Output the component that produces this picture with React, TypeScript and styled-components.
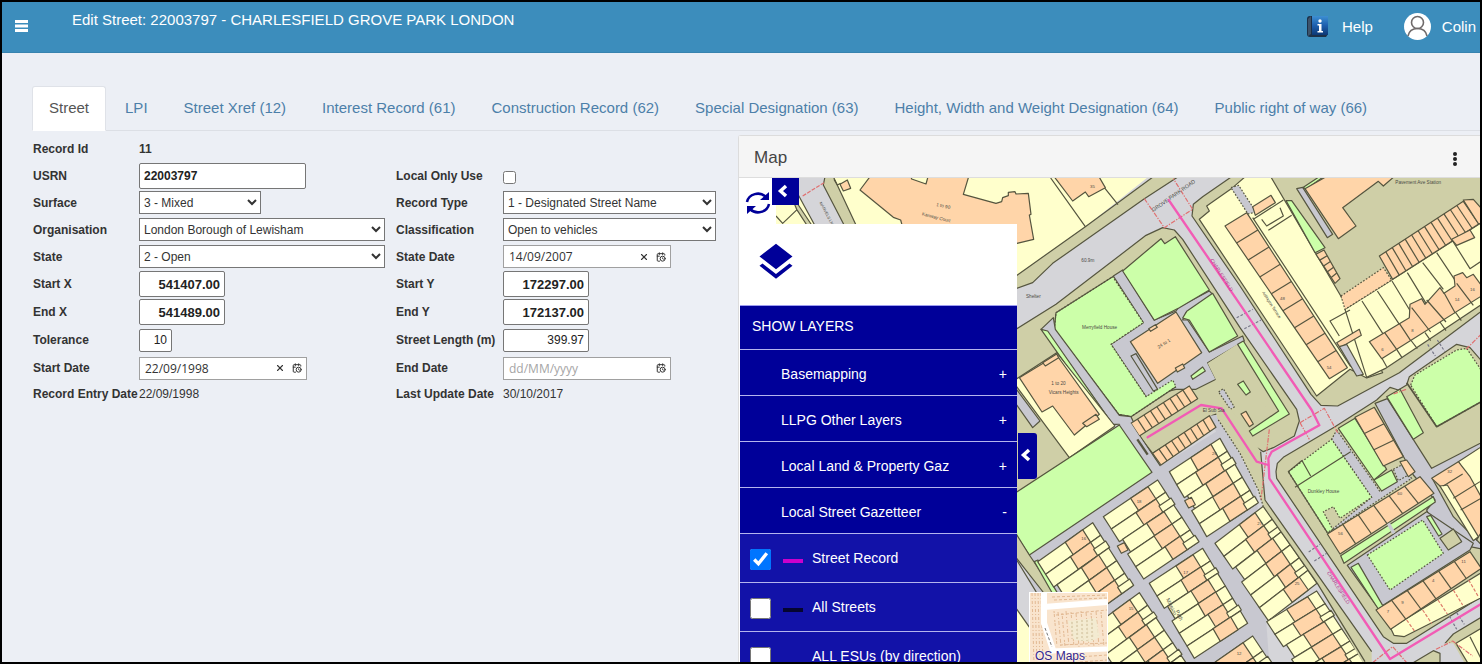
import React from "react";
import styled, { createGlobalStyle } from "styled-components";
import { MdLayers } from "react-icons/md";
import { CalendarClock, X } from "lucide-react";

const GlobalStyle = createGlobalStyle`
  *, *::before, *::after { box-sizing: border-box; }
  body { margin: 0; font-family: "Liberation Sans", Arial, sans-serif; color: #333; background: #ecf0f5; }
  h1, h2, ul, dl, dd { margin: 0; padding: 0; font-weight: 400; }
`;

const NAVY = "#000099";

/* ---------- page shell ---------- */

const Frame = styled.div`
  display: flex;
  flex-direction: column;
  height: 100vh;
  border: 2px solid #000;
  background: #eceff5;
  overflow: hidden;
`;

const Header = styled.header`
  display: flex;
  flex: none;
  align-items: center;
  height: 51px;
  padding: 0 4px 2px 13px;
  background: #3c8dbc;
  border-bottom: 1px solid #3783af;
  color: #fff;
  font-size: 15px;
`;

const MenuButton = styled.button`
  display: flex;
  padding: 0;
  border: 0;
  background: none;
  color: #fff;
`;

const Title = styled.h1`
  flex: 1;
  align-self: flex-start;
  padding: 8px 0 0 44px;
  font-size: 15px;
  line-height: 20px;
`;

const HeaderLink = styled.a<{ $gap: number }>`
  display: flex;
  align-items: center;
  gap: ${(p) => p.$gap}px;
  margin-left: 31px;
  color: #fff;
  text-decoration: none;
`;

const TabBar = styled.nav`
  display: flex;
  flex: none;
  margin: 33px 0 0 30px;
  border-bottom: 1px solid #dcdfe5;
`;

const Tab = styled.a<{ $active?: boolean }>`
  margin: 0 2px -1px 0;
  padding: 10px 16px 12px;
  border: 1px solid ${(p) => (p.$active ? "#dfe2e8" : "transparent")};
  border-bottom-color: ${(p) => (p.$active ? "#fff" : "transparent")};
  border-radius: 3px 3px 0 0;
  background: ${(p) => (p.$active ? "#fff" : "transparent")};
  color: ${(p) => (p.$active ? "#555" : "#4c7fa9")};
  font-size: 15px;
  line-height: 21px;
  text-decoration: none;
  white-space: nowrap;
`;

const Content = styled.main`
  display: grid;
  flex: 1;
  min-height: 0;
  grid-template-columns: 49.8% minmax(0, 1fr);
`;

/* ---------- form ---------- */

const Form = styled.form`
  display: grid;
  align-content: start;
  align-items: center;
  grid-template-columns: 106px 257px 107px minmax(0, 1fr);
  grid-template-rows: repeat(5, 27px) repeat(4, 28px) 24px;
  padding: 4px 0 0 31px;
  font-size: 12px;
`;

const Label = styled.label<{ $second?: boolean }>`
  grid-column: ${(p) => (p.$second ? 3 : 1)};
  font-weight: 700;
  white-space: nowrap;
`;

const TextBox = styled.input<{ $w: number; $strong?: boolean; $number?: boolean }>`
  width: ${(p) => p.$w}px;
  height: ${(p) => (p.$strong ? 26 : 23)}px;
  padding: 1px 4px;
  border: 1px solid #767676;
  border-radius: 2px;
  background: #fff;
  color: #222;
  font: ${(p) => (p.$strong ? 700 : 400)} ${(p) => (p.$strong && p.$number ? 13 : 12)}px "Liberation Sans", Arial, sans-serif;
  text-align: ${(p) => (p.$number ? "right" : "left")};
`;

const Select = styled.select<{ $w: number }>`
  width: ${(p) => p.$w}px;
  height: 23px;
  border: 1px solid #767676;
  border-radius: 0;
  background: #fff;
  color: #333;
  font: 12px "Liberation Sans", Arial, sans-serif;
`;

const Tick = styled.input`
  width: 13px;
  height: 13px;
  margin: 3px 0 0;
`;

const DateBox = styled.div`
  display: flex;
  align-items: center;
  gap: 7px;
  width: 168px;
  height: 23px;
  padding: 0 4px 0 5px;
  border: 1px solid #a0a0a0;
  background: #fff;
`;

const DateInput = styled.input`
  flex: 1;
  min-width: 0;
  padding: 0;
  border: 0;
  outline: 0;
  color: #333;
  font: 12px "Open Sans", sans-serif;
  &::placeholder { color: #a5a5a5; }
`;

const TinyButton = styled.button`
  display: flex;
  padding: 0;
  border: 0;
  background: none;
  color: #333;
`;

function DateField({ id, value }: { id: string; value: string }) {
  return (
    <DateBox>
      <DateInput id={id} defaultValue={value} placeholder="dd/MM/yyyy" />
      {value && (
        <TinyButton type="button" aria-label="Clear date"><X size={10} strokeWidth={2.6} /></TinyButton>
      )}
      <TinyButton type="button" aria-label="Pick date"><CalendarClock size={10} strokeWidth={2.4} /></TinyButton>
    </DateBox>
  );
}

function Choice({ id, w, text }: { id: string; w: number; text: string }) {
  return (
    <Select id={id} $w={w} defaultValue={text}>
      <option>{text}</option>
    </Select>
  );
}

function StreetForm() {
  return (
    <Form>
      <Label as="span">Record Id</Label>
      <b>11</b>

      <Label htmlFor="usrn">USRN</Label>
      <TextBox id="usrn" $w={167} $strong defaultValue="22003797" />
      <Label $second htmlFor="local">Local Only Use</Label>
      <Tick id="local" type="checkbox" />

      <Label htmlFor="surface">Surface</Label>
      <Choice id="surface" w={122} text="3 - Mixed" />
      <Label $second htmlFor="rtype">Record Type</Label>
      <Choice id="rtype" w={213} text="1 - Designated Street Name" />

      <Label htmlFor="org">Organisation</Label>
      <Choice id="org" w={246} text="London Borough of Lewisham" />
      <Label $second htmlFor="class">Classification</Label>
      <Choice id="class" w={213} text="Open to vehicles" />

      <Label htmlFor="state">State</Label>
      <Choice id="state" w={246} text="2 - Open" />
      <Label $second htmlFor="sdate">State Date</Label>
      <DateField id="sdate" value="14/09/2007" />

      <Label htmlFor="sx">Start X</Label>
      <TextBox id="sx" $w={86} $strong $number defaultValue="541407.00" />
      <Label $second htmlFor="sy">Start Y</Label>
      <TextBox id="sy" $w={86} $strong $number defaultValue="172297.00" />

      <Label htmlFor="ex">End X</Label>
      <TextBox id="ex" $w={86} $strong $number defaultValue="541489.00" />
      <Label $second htmlFor="ey">End Y</Label>
      <TextBox id="ey" $w={86} $strong $number defaultValue="172137.00" />

      <Label htmlFor="tol">Tolerance</Label>
      <TextBox id="tol" $w={33} $number defaultValue="10" />
      <Label $second htmlFor="len">Street Length (m)</Label>
      <TextBox id="len" $w={86} $number defaultValue="399.97" />

      <Label htmlFor="start">Start Date</Label>
      <DateField id="start" value="22/09/1998" />
      <Label $second htmlFor="end">End Date</Label>
      <DateField id="end" value="" />

      <Label as="span">Record Entry Date</Label>
      <span>22/09/1998</span>
      <Label as="span" $second>Last Update Date</Label>
      <span>30/10/2017</span>
    </Form>
  );
}

/* ---------- map drawing ---------- */

type Pt = [number, number];
const FILL: Record<string, string> = {
  y: "#ffffcc",
  o: "#ffd5a9",
  g: "#ccffa9",
  v: "#cfcfa7",
  r: "#d5d5d9",
  p: "#c8c8d0",
};
const INK = "#55553f";

/* a filled parcel; points are "x,y x,y ..." */
function Area({ c, pts, dash, bare }: { c: string; pts: string; dash?: boolean; bare?: boolean }) {
  return (
    <polygon
      points={pts}
      fill={FILL[c]}
      stroke={bare ? "none" : INK}
      strokeDasharray={dash ? "5 5" : undefined}
    />
  );
}

const mix = (a: Pt, b: Pt, t: number): Pt => [a[0] + (b[0] - a[0]) * t, a[1] + (b[1] - a[1]) * t];

/* a row of n units between the edges a-b and d-e */
function Row({ a, b, e, d, n, c = "o" }: { a: Pt; b: Pt; e: Pt; d: Pt; n: number; c?: string }) {
  return (
    <>
      <polygon points={[a, b, e, d].join(" ")} fill={FILL[c]} stroke={INK} />
      {Array.from({ length: n - 1 }, (_, i) => {
        const p = mix(a, b, (i + 1) / n);
        const q = mix(d, e, (i + 1) / n);
        return <path key={i} d={`M${p} L${q}`} stroke={INK} fill="none" />;
      })}
    </>
  );
}

/* terraced plots: gardens either side of a stepped line of houses */
function Terrace({ at, u, v, n, from = 0.5, to = 0.82 }: { at: Pt; u: Pt; v: Pt; n: number; from?: number; to?: number }) {
  const pos = (s: number, t: number): Pt => [
    Math.round(at[0] + u[0] * s + v[0] * t),
    Math.round(at[1] + u[1] * s + v[1] * t),
  ];
  return (
    <>
      {Array.from({ length: n }, (_, i) => {
        const t0 = i / n;
        const t1 = (i + 1) / n;
        const jut = i % 2 ? 0.05 : 0;
        const f = from - jut + (i > 2 ? 0.04 : 0);
        const left = i === 2 ? 0.06 : 0;
        return (
          <g key={i} stroke={INK}>
            <polygon points={[pos(left, t0), pos(1, t0), pos(1, t1), pos(left, t1)].join(" ")} fill={FILL.y} />
            <polygon points={[pos(f, t0), pos(to, t0), pos(to, t1), pos(f, t1)].join(" ")} fill={FILL.o} />
            {i % 3 === 1 && (
              <polygon points={[pos(to - 0.02, t0 + 0.1), pos(1.02, t0 + 0.1), pos(1.02, t1), pos(to - 0.02, t1)].join(" ")} fill={FILL.y} />
            )}
          </g>
        );
      })}
    </>
  );
}

function StreetMap() {
  return (
    <MapSvg viewBox="-828 6 2220 1452" preserveAspectRatio="xMinYMin slice" role="img" aria-label="Street map">
      <rect x="-828" y="0" width="2240" height="1470" fill={FILL.r} />
      <g strokeWidth="3.6" strokeLinejoin="round">
        {/* north west of Grove Park Road */}
        <Area c="y" bare pts="-828,0 400,0 208,152 0,300 -60,345 -828,345" />
        <g transform="translate(-858 -138)">
          <path d="M138 258 L158 280 L202 238" stroke={INK} fill="none" />
          <Area c="v" pts="180,190 205,225 255,300 240,300 200,238" />
          <Area c="r" pts="195,140 300,140 380,300 262,300 205,195" />
          <Area c="v" pts="285,140 310,140 385,300 350,300 280,165" />
          <path d="M218 198 L282 158" stroke="#e07070" strokeDasharray="12 4" fill="none" />
          <Area c="o" pts="420,140 390,180 490,262 512,270 520,300 861,340 911,328 898,255 903,253 895,190 858,192 855,185 835,187 835,197 818,203 815,215 798,220 700,193 716,140" />
          <Area c="y" pts="543,140 545,147 588,162 594,140" />
          <Area c="o" pts="330,163 352,150 362,175 340,183" />
          <path d="M312 148 L322 165 L332 160" stroke={INK} fill="none" />
        </g>
        <Area c="v" pts="415,0 490,0 385,68 110,262 50,320 -20,345 -20,315 0,300 208,152" />
        <path d="M104 6 L208 152 M265 35 L306 86" stroke={INK} fill="none" />
        <Area c="o" pts="116,4 170,75 208,48 218,62 268,35 250,4" />

        {/* Merryfield House block */}
        <Area c="v" pts="-10,466 120,385 390,178 440,155 475,162 500,190 672,455 842,700 850,735 835,780 772,815 742,827 715,810 640,700 590,718 410,832 370,780 330,730 -10,1000" />
        <Area c="p" pts="292,300 320,282 415,432 480,405 490,392 580,345 590,355 510,410 500,432 515,432 580,528 680,480 685,495 575,560 600,610 540,640 480,640 390,662 285,505 382,440" />
        <Area c="g" pts="320,285 435,188 446,203 478,182 580,342 490,395 415,433" />
        <Area c="g" dash pts="120,410 290,302 382,440 285,505 390,662 470,612 480,632 345,722 308,715 115,460" />
        <path d="M115 460 L120 410 L290 302 M480 632 L345 722 L308 715 L115 460" stroke={INK} fill="none" />
        <Area c="g" pts="512,406 590,352 665,480 580,528 520,432 500,426" />
        <Area c="o" pts="343,497 480,408 557,530 425,622" />
        <Area c="o" pts="398,458 418,446 424,454 404,466" />
        <Area c="o" pts="478,576 500,564 506,576 484,588" />
        <Area c="p" pts="345,540 360,533 425,640 412,645" />
        <Area c="p" pts="75,460 112,425 118,460 310,718 345,722 372,780 440,880 400,900 310,745 290,745 95,470" />
        <Area c="g" pts="75,460 95,465 292,748 276,745" />
        <Area c="v" bare pts="575,562 668,502 772,672 742,700 640,700 560,690 545,655 600,612" />
        <Area c="g" pts="525,600 560,573 568,585 530,610" />
        <Area c="g" pts="665,625 682,615 703,648 690,657" />
        <Area c="g" pts="665,505 682,495 820,714 710,780 700,765 788,705" />
        <Area c="o" pts="675,714 690,706 712,744 700,752" />
        <Area c="p" dash pts="608,648 622,638 655,693 643,700" />
        <Area c="y" pts="-10,616 122,530 297,750 160,845" />
        <Area c="p" pts="-10,625 72,735 50,755 -10,670" />
        <Area c="o" pts="10,605 122,537 250,715 175,777 110,690 78,708" />
        <Area c="o" pts="200,742 240,715 250,730 212,752" />
        <Area c="o" pts="80,560 122,534 128,545 88,570" />
        <Row a={[345, 742]} b={[520, 630]} e={[545, 668]} d={[370, 780]} n={9} />

        {/* roads and green south west */}
        <g transform="translate(0 702)">
          <Area c="p" bare pts="300,45 345,40 430,170 600,65 580,17 600,15 625,50 720,225 760,760 400,760 40,640 40,435" />
          <Area c="g" pts="-10,254 310,45 408,187 40,435 -10,360" />
          <Area c="v" pts="-10,355 40,435 125,560 100,570 -10,430" />
          <Area c="g" pts="55,455 66,450 125,550 112,555" />
          <Area c="r" pts="-10,430 60,545 40,720 -10,600" />
          <Area c="y" pts="-10,580 60,680 60,760 -10,760" />
          <Row a={[410, 130]} b={[580, 17]} e={[600, 52]} d={[435, 165]} n={9} />
          <path d="M364 88 L395 134" stroke={INK} strokeWidth="7" />
          <Terrace at={[65, 455]} u={[165, -117]} v={[120, 190]} n={5} />
          <Terrace at={[210, 665]} u={[160, -117]} v={[150, 225]} n={6} />
          <Terrace at={[262, 320]} u={[163, -110]} v={[121, 187]} n={5} />
          <Terrace at={[400, 520]} u={[160, -105]} v={[135, 225]} n={6} />
          <Terrace at={[460, 185]} u={[152, -100]} v={[112, 195]} n={5} from={0.42} />
          <Terrace at={[597, 400]} u={[146, -112]} v={[160, 232]} n={6} />
          <Terrace at={[550, 790]} u={[160, -112]} v={[120, 180]} n={4} from={0.3} />
          <Terrace at={[752, 635]} u={[150, -92]} v={[150, 225]} n={6} from={0.4} />
          <Area c="o" pts="304,408 325,398 336,420 316,430" />
          <Area c="o" pts="506,272 526,262 538,284 518,294" />
        </g>

        {/* verge and Dunkley House block */}
        <g transform="translate(672 702)">
          <Area c="v" bare pts="-75,-5 -30,-5 20,60 62,125 75,270 395,725 395,770 375,770 232,520 70,290 55,240 0,130 -68,25" />
          <path d="M62 125 L75 270 L395 725 M375 755 L232 520 L70 290" stroke={INK} fill="none" />
          <path d="M70 290 L55 240 L0 130 L-68 25" stroke={INK} strokeDasharray="5 5" fill="none" />
          <Area c="v" pts="108,185 112,160 130,142 285,50 410,-30 450,-68 475,-60 500,-75 508,-100 650,-197 690,-187 740,-130 740,550 500,700 460,700 430,680 110,205" />
          <Area c="p" pts="405,-20 442,-34 575,175 740,90 740,125 578,208 640,320 740,420 690,410 600,395 560,300 585,270 520,195" />
          <Area c="g" dash pts="512,-75 525,-105 650,-180 680,-185 740,-95 740,-34 590,50" />
          <path d="M500 -82 L590 50 L740 -34" stroke={INK} fill="none" strokeWidth="5" />
          <Area c="g" pts="440,-40 480,-62 550,68 520,88" />
          <Area c="p" dash pts="290,60 400,215 420,245 500,190 515,205 262,372 280,355 395,262 275,88" />
          <Area c="g" pts="295,55 345,25 440,178 402,210" />
          <Area c="g" pts="402,210 455,180 472,215 425,243" />
          <Area c="p" dash pts="460,178 485,165 505,195 475,212" />
          <Row a={[403, -8]} b={[490, 140]} e={[430, 168]} d={[345, 22]} n={3} />
          <Area c="o" pts="480,155 500,150 525,185 505,200" />
          <Area c="g" dash pts="145,185 275,88 395,262 300,325 280,290 250,305 278,358 262,368" />
          <path d="M165 232 L332 125 M185 150 L212 198 M262 368 L145 185 L185 152" stroke={INK} fill="none" />
          <Row a={[262, 372]} b={[540, 200]} e={[582, 250]} d={[300, 432]} n={6} />
          <Area c="g" pts="302,437 580,260 586,276 312,460" />
          <Area c="p" pts="322,466 560,305 700,400 690,420 415,595" />
          <path d="M445 340 L462 370" stroke={FILL.p} strokeWidth="10" />
          <Area c="g" dash pts="382,435 548,330 610,430 450,540" />
          <Area c="g" pts="333,472 355,460 430,590 415,597" />
          <Area c="g" pts="560,320 572,316 606,372 596,378" />
          <Area c="v" pts="600,385 640,357 665,395 625,420" />
          <Area c="y" pts="452,655 740,478 740,555 492,680 462,676" />
          <path d="M500 630 L525 665 M548 600 L575 640 M594 570 L622 612 M640 540 L668 585 M686 510 L714 558" stroke="#dd7b6a" strokeDasharray="10 5" fill="none" />
          <Row a={[408, 600]} b={[690, 425]} e={[724, 475]} d={[452, 658]} n={6} />
          <Area c="y" pts="655,155 740,100 740,280 720,260" />
          <Area c="o" pts="575,205 655,155 690,200 740,290 740,340 710,390 600,228" />
          <Area c="y" pts="600,228 622,225 715,380 700,392" />
          <path d="M610 228 L668 192 M640 265 L720 215 M662 300 L740 255" stroke={INK} fill="none" />
          <Area c="v" pts="620,770 615,700 640,672 740,612 740,770" />
          <Area c="y" pts="648,700 740,645 740,770 690,770" />
          <Area c="v" pts="500,770 580,722 600,730 600,770" />
          <Area c="r" bare pts="600,770 612,700 640,700 680,770" />
          <path d="M690 680 L735 770" stroke={INK} />
        </g>

        {/* north east block */}
        <Area c="v" pts="650,0 560,62 532,85 528,120 672,330 885,655 915,688 965,690 1150,590 1410,395 1410,0" />
        <Area c="y" pts="550,130 580,105 572,90 650,35 690,0 763,0 992,390 1100,590 1052,606 1002,580 902,660" />
        <Area c="p" dash pts="645,35 668,28 720,108 696,114" />
        <g transform="translate(672 0)">
          <Row a={[20, 110]} b={[322, 575]} e={[268, 608]} d={[-45, 150]} n={9} />
          <path d="M38 125 L332 572" stroke={INK} />
          <Area c="o" pts="38,92 93,58 106,80 46,118" />
          <path d="M65 130 L80 150 L130 120 L120 95 M85 163 L155 118 M40 130 L130 72" stroke={INK} fill="none" />
          <Area c="g" pts="138,74 155,74 255,215 225,230" />
          <Area c="p" pts="170,38 188,34 278,175 262,185" />
          <Area c="g" pts="190,34 235,4 248,4 198,40" />
          <Area c="o" pts="195,38 255,4 460,4 430,30 415,16 308,95 348,150 295,188" />
          <Row a={[228, 235]} b={[285, 322]} e={[300, 308]} d={[252, 222]} n={5} />
          <Area c="y" pts="315,400 455,312 740,130 740,375 435,578 380,604" />
          <path d="M366 375 L430 475 M412 345 L478 445 M456 315 L520 420 M502 290 L560 385 M548 260 L610 340 M590 230 L650 320 M638 195 L690 278 L740 245 M425 545 L440 572 M470 520 L486 545 M512 492 L532 518 M555 470 L572 494 M600 438 L618 464 M646 408 L664 434" stroke={INK} fill="none" />
          <Row a={[418, 240]} b={[670, 76]} e={[716, 144]} d={[458, 310]} n={13} />
          <Area c="o" pts="670,72 700,70 735,110 735,135 716,144" />
          <Area c="o" pts="635,190 690,162 704,185 650,208" />
          <Area c="o" dash pts="303,360 430,275 455,312 315,400" />
          <Area c="o" pts="388,497 508,425 510,385 545,368 555,385 600,335 612,352 645,330 642,300 668,290 680,305 700,295 740,350 425,548" />
          <path d="M434 470 L470 520 M478 442 L512 494 M515 395 L572 468 M560 372 L618 438 M612 350 L646 412 M650 322 L700 388" stroke={INK} fill="none" />
          <path d="M330 402 L270 435 L298 480" stroke={INK} fill="none" />
          <Area c="o" pts="290,500 358,460 364,478 300,515" />
          <Area c="p" pts="298,512 320,505 370,595 350,600" />
        </g>

        {/* crossing marks */}
        <g stroke="#e07070" fill="none" strokeDasharray="14 4 4 4">
          <path d="M385 68 L445 155 L530 100 L472 8" />
          <path d="M852 740 L925 697 L965 770 M852 740 L880 790 M760 760 L735 970" />
          <path d="M1070 1460 L1130 1412 L1172 1460 M1170 640 L1130 655 M1350 520 L1400 470 M1260 1420 L1310 1395 L1370 1440" />
        </g>
        <path d="M662 425 L710 400 M685 458 L735 432 M878 1128 L912 1105 M895 1155 L932 1132 M1235 505 L1258 540 M1264 492 L1286 526 M1300 1320 L1322 1360 M1322 1310 L1345 1345" stroke="#777788" strokeDasharray="8 5" fill="none" />

        {/* selected street */}
        <g stroke="#f25bb5" fill="none" strokeWidth="7" strokeLinecap="round">
          <path d="M458 72 L672 385 L887 702 L910 748 L767 827 L757 847 L760 907 L1122 1449 L1400 1281" />
          <path d="M395 784 L555 687 L617 697 L722 857 L757 867" />
        </g>
      </g>

      {/* map lettering */}
      <g fill="#4a4a44" fontSize="14" fontFamily="Liberation Sans, sans-serif">
        <text x="198" y="458">Merryfield House</text>
        <text x="106" y="628">1 to 20</text>
        <text x="98" y="654">Vicars Heights</text>
        <text x="30" y="366">Shelter</text>
        <text x="196" y="258">60.9m</text>
        <text x="560" y="708">El Sub Sta</text>
        <text x="875" y="950">Dunkley House</text>
        <text x="1138" y="24">Pavement Ave Station</text>
        <text transform="translate(-283 118) rotate(14)">Kanway Court</text>
        <text transform="translate(-240 90) rotate(12)">1 to 90</text>
        <text transform="translate(428 518) rotate(-32)">24 to 1</text>
        <text transform="translate(412 108) rotate(-35)" fontSize="16">GROVE PARK ROAD</text>
        <text transform="translate(-590 80) rotate(62)" fontSize="12">MARVELS LN</text>
        <text transform="translate(582 252) rotate(57)" fontSize="15" fill="#b0358a">CHARLESFIELD</text>
        <text transform="translate(932 1190) rotate(57)" fontSize="15" fill="#b0358a">CHARLESFIELD</text>
        <text transform="translate(738 350) rotate(57)" fontSize="12">Adlington Terrace</text>
        <text transform="translate(450 1270) rotate(65)" fontSize="16">Mission</text>
        <text transform="translate(478 1305) rotate(65)" fontSize="16">Path</text>
        <g fontSize="13">
          <text x="222" y="36">35</text>
          <text x="196" y="1092">16</text>
          <text x="362" y="982">18</text>
          <text x="588" y="836">26</text>
          <text x="502" y="1194">17</text>
          <text x="338" y="1302">15</text>
          <text x="724" y="1046">27</text>
          <text x="836" y="1228">25</text>
          <text x="662" y="1438">12</text>
          <text x="1096" y="524">6</text>
          <text x="1186" y="468">8</text>
          <text x="1316" y="376">14</text>
          <text x="1362" y="346">16</text>
          <text x="966" y="1078">56</text>
          <text x="1144" y="956">60</text>
          <text x="1294" y="892">32</text>
          <text x="1112" y="1312">7</text>
          <text x="1156" y="1284">9</text>
          <text x="1248" y="1218">4</text>
          <text x="1336" y="1162">11</text>
          <text x="792" y="372">48</text>
          <text x="932" y="578">54</text>
        </g>
      </g>
    </MapSvg>
  );
}

const MapSvg = styled.svg`
  position: absolute;
  inset: 0;
  width: 100%;
  height: 100%;
`;

/* ---------- map panel ---------- */

const Panel = styled.section`
  display: flex;
  flex-direction: column;
  min-height: 0;
  margin-top: 4px;
  border: 1px solid #dcdcdc;
  border-width: 1px 0 0 1px;
  border-radius: 3px 0 0 0;
  background: #fff;
`;

const PanelHead = styled.div`
  display: flex;
  flex: none;
  align-items: center;
  justify-content: space-between;
  height: 42px;
  padding: 0 23px 0 15px;
  border-bottom: 1px solid #ddd;
  background: #f5f5f5;
  color: #444;
`;

const PanelTitle = styled.h2`
  padding-top: 2px;
  font-size: 17px;
  line-height: 22px;
`;

const MoreButton = styled.button`
  display: flex;
  flex-direction: column;
  gap: 1px;
  padding: 5px 0 0;
  border: 0;
  background: none;
`;

const Dot = styled.span`
  width: 4px;
  height: 4px;
  border-radius: 2px;
  background: #222;
`;

const Canvas = styled.div`
  position: relative;
  flex: 1;
  min-height: 0;
  overflow: hidden;
  border-left: 1px solid #fff;
`;

const Overlay = styled.div`
  position: relative;
  display: flex;
  align-items: flex-start;
`;

const Side = styled.div`
  width: 277px;
`;

const Tools = styled.div`
  display: flex;
  align-items: flex-start;
  height: 46px;
`;

const RefreshButton = styled.button`
  display: flex;
  align-items: center;
  justify-content: center;
  width: 36px;
  height: 46px;
  padding: 4px 0 0;
  border: 0;
  background: #fff;
`;

const FoldButton = styled.button<{ $tall?: boolean }>`
  display: flex;
  align-items: center;
  justify-content: center;
  width: ${(p) => (p.$tall ? 19 : 27)}px;
  height: ${(p) => (p.$tall ? 46 : 27)}px;
  margin: ${(p) => (p.$tall ? "255px 0 0 1px" : "0 0 0 -4px")};
  padding: ${(p) => (p.$tall ? "0 4px 2px 0" : "0 6px 2px 0")};
  border: 0;
  border-radius: ${(p) => (p.$tall ? "0 3px 3px 0" : "0")};
  background: ${NAVY};
  color: #fff;
`;

const LayersHead = styled.div`
  height: 81px;
  padding: 16px 14px 0;
  background: #fff;
  color: ${NAVY};
`;

const Legend = styled.div`
  height: 44px;
  padding: 0 12px;
  border-top: 1px solid #9d9df0;
  background: ${NAVY};
  color: #fff;
  font-size: 14px;
  line-height: 41px;
`;

const GroupButton = styled.button`
  display: flex;
  justify-content: space-between;
  align-items: center;
  width: 100%;
  height: 46px;
  padding: 3px 10px 0 41px;
  border: 0;
  border-top: 1px solid #b4b4ee;
  background: ${NAVY};
  color: #fff;
  font: 14px "Liberation Sans", Arial, sans-serif;
`;

const LayerRow = styled.label`
  display: flex;
  align-items: center;
  height: 49px;
  padding: 0 10px;
  border-top: 1px solid #b4b4ee;
  background: #1212a8;
  color: #fff;
  font-size: 14px;
`;

const LayerTick = styled.input`
  width: 21px;
  height: 21px;
  margin: 3px 12px 0 0;
  accent-color: #0075ff;
`;

const Swatch = styled.span<{ $color: string }>`
  width: 20px;
  height: 4px;
  margin: 6px 9px 0 0;
  background: ${(p) => p.$color};
`;

const Thumb = styled.button`
  position: absolute;
  left: 289px;
  top: 414px;
  width: 79px;
  height: 74px;
  padding: 0;
  border: 1px solid #fff;
  background: #fff;
  overflow: hidden;
`;

const ThumbLabel = styled.span`
  position: absolute;
  left: 5px;
  top: 56px;
  color: #33248c;
  font: 12px/14px "Liberation Sans", Arial, sans-serif;
  text-shadow: 0 0 2px #fff, 0 0 2px #fff;
`;

function BarsIcon() {
  return (
    <svg width="13" height="12" viewBox="0 0 13 12" aria-hidden="true">
      <path d="M0 0 H13 V3 H0Z M0 4.500 H13 V7.500 H0Z M0 9 H13 V12 H0Z" fill="currentColor" />
    </svg>
  );
}

function ChevronIcon() {
  return (
    <svg width="11" height="14" viewBox="0 0 11 14" aria-hidden="true">
      <path d="M9 2 L3.500 7 L9 12" fill="none" stroke="currentColor" strokeWidth="3.500" />
    </svg>
  );
}

function RefreshIcon() {
  return (
    <svg width="26" height="26" viewBox="0 0 26 26" fill="none" aria-hidden="true">
      <path d="M2 12 A11 10 0 0 1 21 7 M24 14 A11 10 0 0 1 5 19" stroke={NAVY} strokeWidth="2.500" />
      <path d="M24 2 V10 H15 Z M2 24 V16 H11 Z" fill={NAVY} />
    </svg>
  );
}

function InfoIcon() {
  return (
    <svg width="22" height="22" viewBox="0 0 22 22" aria-hidden="true">
      <defs>
        <linearGradient id="book" x1="0" y1="0" x2="0" y2="1">
          <stop offset="0" stopColor="#3d8fd2" />
          <stop offset="0.5" stopColor="#1d5fae" />
          <stop offset="1" stopColor="#0d3875" />
        </linearGradient>
      </defs>
      <path d="M3 1 H21 V19 L19 22 H3 Q0 22 0 19 V4 Q0 1 3 1Z" fill="#1c3048" />
      <path d="M1 4 L4 1 V19 L1 21Z" fill="#3d536b" />
      <rect x="5" y="1" width="16" height="19" fill="url(#book)" />
      <circle cx="13" cy="6" r="1.700" fill="#fff" />
      <path d="M10.500 9 H14.500 V16 H16 V17.500 H10.500 V16 H12 V10.500 H10.500Z" fill="#fff" />
    </svg>
  );
}

function UserIcon() {
  return (
    <svg width="27" height="27" viewBox="0 0 27 27" aria-hidden="true">
      <circle cx="13.500" cy="13.500" r="13.500" fill="#fff" />
      <g fill="none" stroke="#6f6a6a" strokeWidth="1.600">
        <circle cx="13.500" cy="9.500" r="6" />
        <path d="M4 23 C5 18 8 15.500 13.500 15.500 C19 15.500 22 18 23 23" />
      </g>
    </svg>
  );
}

function ThumbMap() {
  return (
    <svg width="77" height="72" viewBox="0 0 77 72" aria-hidden="true">
      <rect width="77" height="72" fill="#f9e4cd" />
      <g stroke="#e2b993" fill="none">
        {[2, 5, 8, 11].map((x) => <path key={x} d={`M${x} 0 L${x + 2} 72`} strokeDasharray="3 2 1 2" />)}
        {[24, 28, 32, 36, 41, 46, 51, 56, 61, 66, 71].map((x, i) => (
          <path key={x} d={`M${x} ${18 + (i % 3)} L${x + 3} 54`} strokeDasharray={i % 2 ? "4 2 1 2" : "2 1 3 3"} />
        ))}
        <path d="M22 4 L77 2 M24 7 L77 5 M26 22 L77 17 M30 52 L77 50 M34 65 L77 62 M50 69 L77 67" strokeDasharray="3 2" />
      </g>
      <path d="M38 28 L66 25 L70 44 L60 49 L44 47Z" fill="#f1ecd2" opacity="0.8" />
      <g stroke="#cdbd98" fill="none" strokeDasharray="2 2">
        <path d="M42 29 V46 M47 28 V48 M52 27 V48 M57 27 V48 M62 26 V47" />
      </g>
      <path d="M14 0 V30 L24 60" stroke="#fff" strokeWidth="6" fill="none" />
      <path d="M14 14 L77 9" stroke="#fff" strokeWidth="6" fill="none" />
      <path d="M20 58 L77 56" stroke="#fff" strokeWidth="5" fill="none" />
      <path d="M15 35 L22 54" stroke="#777" strokeDasharray="3 2" fill="none" />
    </svg>
  );
}

const tabs = [
  "Street",
  "LPI",
  "Street Xref (12)",
  "Interest Record (61)",
  "Construction Record (62)",
  "Special Designation (63)",
  "Height, Width and Weight Designation (64)",
  "Public right of way (66)",
];

const groups = [
  ["Basemapping", "+"],
  ["LLPG Other Layers", "+"],
  ["Local Land & Property Gaz", "+"],
  ["Local Street Gazetteer", "-"],
];

const layers = [
  { name: "Street Record", color: "#cc00cc", on: true },
  { name: "All Streets", color: "#050530", on: false },
  { name: "ALL ESUs (by direction)", color: "transparent", on: false },
];

export default function App() {
  return (
    <Frame>
      <GlobalStyle />
      <Header>
        <MenuButton aria-label="Menu"><BarsIcon /></MenuButton>
        <Title>Edit Street: 22003797 - CHARLESFIELD GROVE PARK LONDON</Title>
        <HeaderLink href="#help" $gap={13}><InfoIcon />Help</HeaderLink>
        <HeaderLink href="#user" $gap={11}><UserIcon />Colin</HeaderLink>
      </Header>
      <TabBar>
        {tabs.map((t, i) => <Tab key={t} href="#" $active={i === 0}>{t}</Tab>)}
      </TabBar>
      <Content>
        <StreetForm />
        <Panel>
          <PanelHead>
            <PanelTitle>Map</PanelTitle>
            <MoreButton aria-label="More"><Dot /><Dot /><Dot /></MoreButton>
          </PanelHead>
          <Canvas>
            <StreetMap />
            <Overlay>
              <Side>
                <Tools>
                  <RefreshButton aria-label="Refresh"><RefreshIcon /></RefreshButton>
                  <FoldButton aria-label="Hide tools"><ChevronIcon /></FoldButton>
                </Tools>
                <LayersHead><MdLayers size={44} /></LayersHead>
                <Legend>SHOW LAYERS</Legend>
                {groups.map(([name, sign]) => (
                  <GroupButton key={name}><span>{name}</span><span>{sign}</span></GroupButton>
                ))}
                {layers.map((l) => (
                  <LayerRow key={l.name}>
                    <LayerTick type="checkbox" defaultChecked={l.on} />
                    <Swatch $color={l.color} />
                    {l.name}
                  </LayerRow>
                ))}
              </Side>
              <FoldButton $tall aria-label="Hide layers"><ChevronIcon /></FoldButton>
            </Overlay>
            <Thumb><ThumbMap /><ThumbLabel>OS Maps</ThumbLabel></Thumb>
          </Canvas>
        </Panel>
      </Content>
    </Frame>
  );
}
